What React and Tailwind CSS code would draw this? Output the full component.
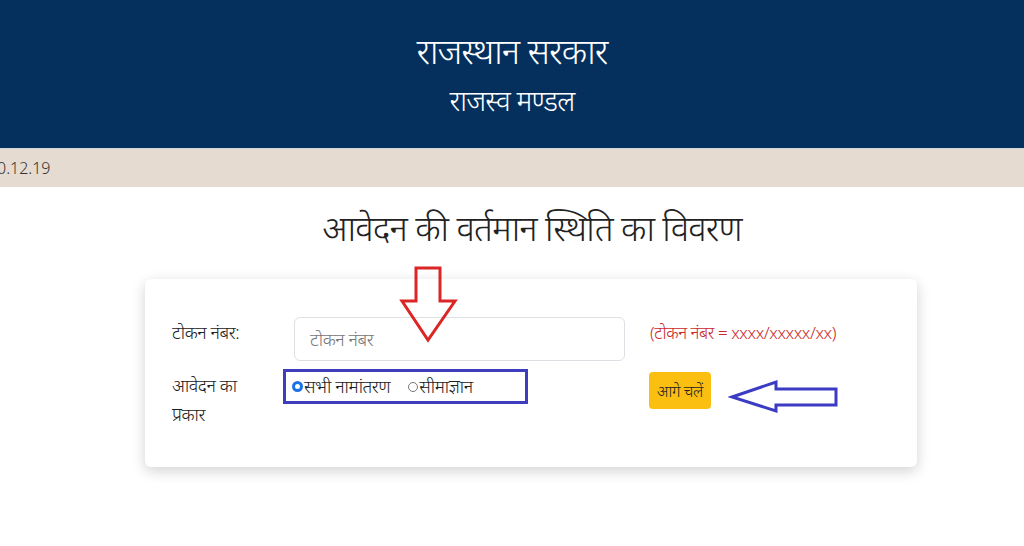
import React from "react";

export default function App() {
  return (
    <div className="w-[1024px] h-[546px] bg-white overflow-hidden relative font-['Noto_Sans',sans-serif] font-light">
      <header className="h-[148px] bg-[#05305d] flex flex-col items-center justify-center text-white">
        <div className="text-[35px] leading-[46px] tracking-tight">राजस्थान सरकार</div>
        <div className="text-[28px] leading-[40px] mt-[6px] tracking-tight">राजस्व मण्डल</div>
      </header>
      <div className="h-[39px] bg-[#e6dbd1] flex items-center border-t border-[#d0d4d8]">
        <span className="text-[16px] text-[#333] ml-[-3px]">0.12.19</span>
      </div>
      <h1 className="text-center text-[35px] text-[#222] mt-[17px] leading-[48px] tracking-tight pl-[40px]">
        आवेदन की वर्तमान स्थिति का विवरण
      </h1>
      <div className="ml-[145px] mt-[27px] w-[772px] h-[188px] bg-white rounded-[6px] shadow-[0_4px_14px_rgba(0,0,0,0.18)] pt-[38px] pl-[27px]">
        <div className="flex items-start">
          <div className="w-[122px] mt-[2px] text-[18px] leading-[27px] text-[#222] tracking-tight">टोकन नंबर:</div>
          <div className="w-[331px] h-[44px] border border-[#dcdfe3] rounded-[6px] flex items-center pl-[15px] text-[18px] text-[#777] tracking-tight">
            टोकन नंबर
          </div>
          <div className="ml-[25px] mt-[2px] text-[17px] leading-[27px] text-[#c9282d] tracking-tight">(टोकन नंबर = xxxx/xxxxx/xx)</div>
        </div>
        <div className="flex items-start mt-[8px]">
          <div className="w-[111px] mt-[2px] text-[18px] leading-[29px] text-[#222] tracking-tight">आवेदन का<br />प्रकार</div>
          <div className="w-[245px] h-[35px] border-[3px] border-[#3d3dbd] flex items-center pl-[6px] text-[18px] text-[#222] tracking-tight">
            <span className="w-[11px] h-[11px] rounded-full border-[3px] border-[#1a73e8] bg-white mr-[1px] box-border"></span>
            <span>सभी नामांतरण</span>
            <span className="w-[10px] h-[10px] rounded-full border border-[#777] ml-[18px] mr-[1px]"></span>
            <span>सीमाज्ञान</span>
          </div>
          <div className="ml-[121px] mt-[3px] h-[37px] px-[8px] bg-[#fbbf12] rounded-[4px] flex items-center text-[16px] text-[#222] tracking-tight">
            आगे चलें
          </div>
        </div>
      </div>
      <svg className="absolute left-[398px] top-[265px]" width="62" height="80" viewBox="0 0 62 80">
        <polygon points="18,3 42,3 42,36 57,36 30,75 4,36 18,36" fill="none" stroke="#dc2626" strokeWidth="3" strokeLinejoin="miter" />
      </svg>
      <svg className="absolute left-[728px] top-[378px]" width="114" height="36" viewBox="0 0 114 36">
        <polygon points="4,19 48,4 48,11 108,11 108,27 48,27 48,33" fill="none" stroke="#3b3bc4" strokeWidth="3" />
      </svg>
    </div>
  );
}
